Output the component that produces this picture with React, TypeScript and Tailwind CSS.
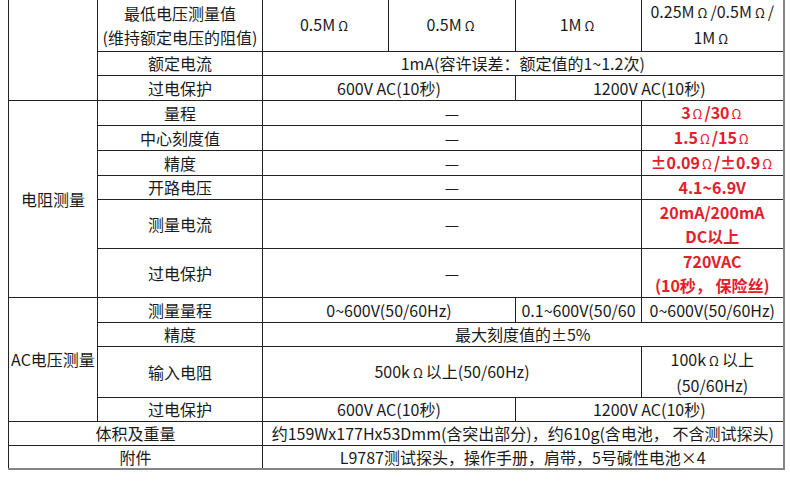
import React from "react";

const Om = ({ red = false }: { red?: boolean }) => (
  <span className={red ? "text-[13px] mx-[2px] font-normal" : "text-[13px] mx-[3px]"}>Ω</span>
);

const td = "border border-[#222] text-center align-middle p-0";
const two = " leading-[24px]";
const last = " border-r-2 border-r-[#858585]";
const bot = " border-b-2 border-b-[#858585]";
const red = "text-[#e3202a] font-bold";
const strip = td + " border-t-0 text-[0px] leading-[0px]";

export default function App() {
  return (
    <div
      className="w-[790px] h-[489px] overflow-hidden bg-white pl-[8px] text-[16px] leading-[22px] text-[#1a1a1a]"
      style={{ fontFamily: '"Noto Sans CJK SC", "Noto Sans", sans-serif' }}
    >
      <table className="table-fixed border-collapse w-[775px] -mt-[5px]">
        <colgroup>
          <col className="w-[89px]" />
          <col className="w-[165px]" />
          <col className="w-[126px]" />
          <col className="w-[127px]" />
          <col className="w-[126px]" />
          <col className="w-[142px]" />
        </colgroup>
        <tbody>
          <tr className="h-[3px]">
            <td rowSpan={4} className={strip}></td>
            <td className={strip}></td>
            <td className={strip}></td>
            <td className={strip}></td>
            <td className={strip}></td>
            <td className={strip + last}></td>
          </tr>
          <tr className="h-[49px]">
            <td className={td + two}>
              最低电压测量值
              <br />
              (维持额定电压的阻值)
            </td>
            <td className={td}>
              0.5M<Om />
            </td>
            <td className={td}>
              0.5M<Om />
            </td>
            <td className={td}>
              1M<Om />
            </td>
            <td className={td + last + two}>
              0.25M<Om />/0.5M<Om />/
              <br />
              1M<Om />
            </td>
          </tr>
          <tr className="h-[24px]">
            <td className={td}>额定电流</td>
            <td colSpan={4} className={td + last}>
              1mA(容许误差：额定值的1~1.2次)
            </td>
          </tr>
          <tr className="h-[25px]">
            <td className={td}>过电保护</td>
            <td colSpan={2} className={td}>
              600V AC(10秒)
            </td>
            <td colSpan={2} className={td + last}>
              1200V AC(10秒)
            </td>
          </tr>
          <tr className="h-[24px]">
            <td rowSpan={6} className={td}>
              电阻测量
            </td>
            <td className={td}>量程</td>
            <td colSpan={3} className={td}>
              —
            </td>
            <td className={td + last + " " + red}>
              3<Om red />/30<Om red />
            </td>
          </tr>
          <tr className="h-[24px]">
            <td className={td}>中心刻度值</td>
            <td colSpan={3} className={td}>
              —
            </td>
            <td className={td + last + " " + red}>
              1.5<Om red />/15<Om red />
            </td>
          </tr>
          <tr className="h-[24px]">
            <td className={td}>精度</td>
            <td colSpan={3} className={td}>
              —
            </td>
            <td className={td + last + " " + red}>
              ±0.09<Om red />/±0.9<Om red />
            </td>
          </tr>
          <tr className="h-[24px]">
            <td className={td}>开路电压</td>
            <td colSpan={3} className={td}>
              —
            </td>
            <td className={td + last + " " + red}>4.1~6.9V</td>
          </tr>
          <tr className="h-[49px]">
            <td className={td}>测量电流</td>
            <td colSpan={3} className={td}>
              —
            </td>
            <td className={td + last + two + " " + red}>
              20mA/200mA
              <br />
              DC以上
            </td>
          </tr>
          <tr className="h-[49px]">
            <td className={td}>过电保护</td>
            <td colSpan={3} className={td}>
              —
            </td>
            <td className={td + last + two + " " + red}>
              720VAC
              <br />
              (10秒， 保险丝)
            </td>
          </tr>
          <tr className="h-[25px]">
            <td rowSpan={4} className={td}>
              AC电压测量
            </td>
            <td className={td}>测量量程</td>
            <td colSpan={2} className={td}>
              0~600V(50/60Hz)
            </td>
            <td className={td + " whitespace-nowrap overflow-hidden"}>0.1~600V(50/60</td>
            <td className={td + last}>0~600V(50/60Hz)</td>
          </tr>
          <tr className="h-[24px]">
            <td className={td}>精度</td>
            <td colSpan={4} className={td + last}>
              最大刻度值的±5%
            </td>
          </tr>
          <tr className="h-[49px]">
            <td className={td}>输入电阻</td>
            <td colSpan={3} className={td}>
              500k<Om />以上(50/60Hz)
            </td>
            <td className={td + last + two}>
              100k<Om />以上
              <br />
              (50/60Hz)
            </td>
          </tr>
          <tr className="h-[24px]">
            <td className={td}>过电保护</td>
            <td colSpan={2} className={td}>
              600V AC(10秒)
            </td>
            <td colSpan={2} className={td + last}>
              1200V AC(10秒)
            </td>
          </tr>
          <tr className="h-[24px]">
            <td colSpan={2} className={td}>
              体积及重量
            </td>
            <td colSpan={4} className={td + last + " whitespace-nowrap"}>
              约159Wx177Hx53Dmm(含突出部分)，约610g(含电池， 不含测试探头)
            </td>
          </tr>
          <tr className="h-[24px]">
            <td colSpan={2} className={td + bot}>
              附件
            </td>
            <td colSpan={4} className={td + last + bot}>
              L9787测试探头，操作手册，肩带，5号碱性电池×4
            </td>
          </tr>
        </tbody>
      </table>
    </div>
  );
}
